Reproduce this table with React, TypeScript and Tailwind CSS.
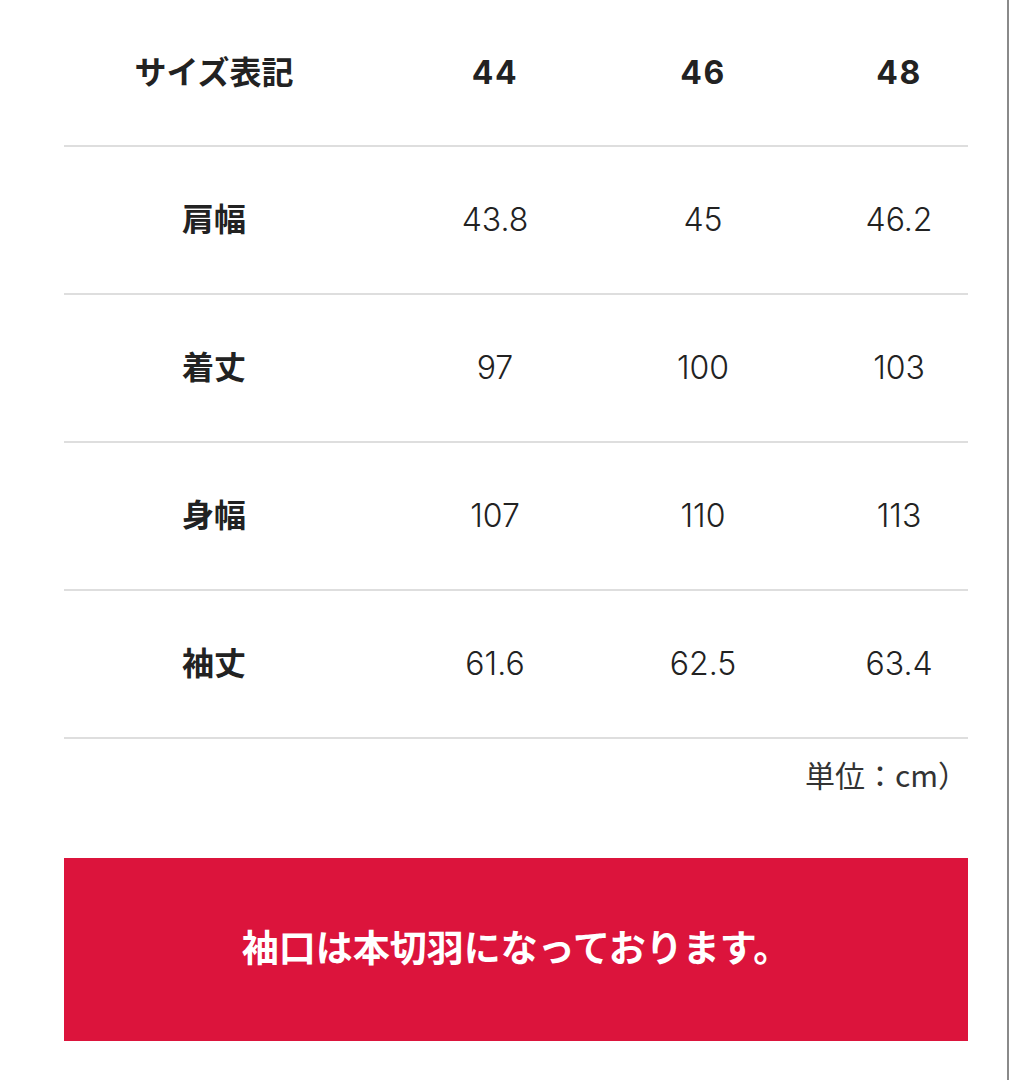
import React from 'react';

const rows = [
  { label: '肩幅', values: ['43.8', '45', '46.2'] },
  { label: '着丈', values: ['97', '100', '103'] },
  { label: '身幅', values: ['107', '110', '113'] },
  { label: '袖丈', values: ['61.6', '62.5', '63.4'] },
];

const App: React.FC = () => {
  return (
    <div className="w-[1009px] h-[1080px] bg-white border-r-2 border-[#8a8a8a] text-[#222] font-['Noto_Sans_CJK_JP','Noto_Sans',sans-serif]">
      <div className="pl-[64px] pr-[39px]">
        <div className="grid grid-cols-[300px_262px_154px_188px] h-[147px] items-center border-b-2 border-[#dedede]">
          <div className="text-center text-[32px] font-bold mb-[6px]">サイズ表記</div>
          <div className="text-center text-[32px] font-bold tracking-[0.05em] font-['Inter',sans-serif]">44</div>
          <div className="text-center text-[32px] font-bold tracking-[0.05em] font-['Inter',sans-serif]">46</div>
          <div className="text-center text-[32px] font-bold tracking-[0.05em] font-['Inter',sans-serif] pl-[50px]">48</div>
        </div>
        {rows.map((r) => (
          <div
            key={r.label}
            className="grid grid-cols-[300px_262px_154px_188px] h-[148px] items-center border-b-2 border-[#dedede]"
          >
            <div className="text-center text-[32px] font-bold mb-[6px]">{r.label}</div>
            <div className="text-center text-[32px] font-light font-['Inter',sans-serif]">{r.values[0]}</div>
            <div className="text-center text-[32px] font-light font-['Inter',sans-serif]">{r.values[1]}</div>
            <div className="text-center text-[32px] font-light font-['Inter',sans-serif] pl-[50px]">{r.values[2]}</div>
          </div>
        ))}
        <div className="text-right text-[30px] text-[#333] pt-[13px] h-[119px]">
          単位：cm）
        </div>
        <div className="bg-[#dc143c] h-[183px] flex items-center justify-center">
          <p className="text-white text-[37px] font-bold mb-[6px]">袖口は本切羽になっております。</p>
        </div>
      </div>
    </div>
  );
};

export default App;
